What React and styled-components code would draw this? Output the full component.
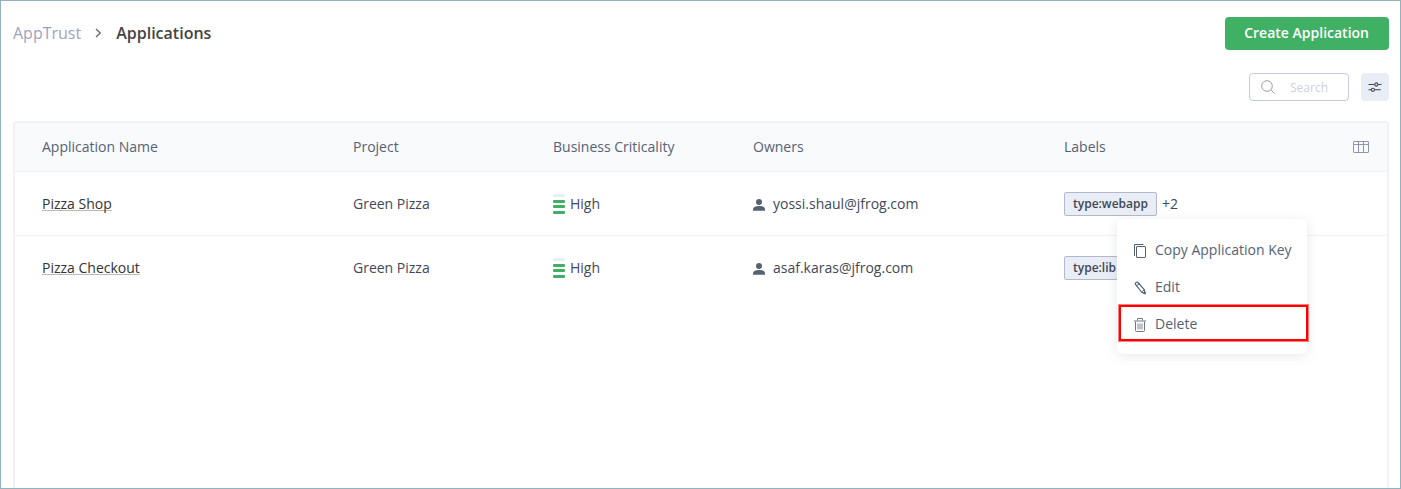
import styled, { createGlobalStyle } from 'styled-components';

const applications = [
    { name: "Pizza Shop", project: "Green Pizza", level: 3, criticality: "High", owner: "yossi.shaul@jfrog.com", label: "type:webapp", more: "+2" },
    { name: "Pizza Checkout", project: "Green Pizza", level: 3, criticality: "High", owner: "asaf.karas@jfrog.com", label: "type:lib", more: "" },
];

export default function App() {
    return (
        <>
            <GlobalStyle />
            <Page>
                <Header>
                    <Breadcrumb aria-label="Breadcrumb">
                        <a href="#apptrust">AppTrust</a>
                        <ChevronIcon />
                        <h1>Applications</h1>
                    </Breadcrumb>
                    <CreateButton type="button">Create Application</CreateButton>
                </Header>
                <Toolbar>
                    <SearchBox>
                        <SearchIcon />
                        <input type="text" placeholder="Search" aria-label="Search" />
                    </SearchBox>
                    <FilterButton type="button" aria-label="Filters">
                        <SlidersIcon />
                    </FilterButton>
                </Toolbar>
                <Panel>
                    <Table>
                        <colgroup>
                            <col />
                            <Col $width={200} />
                            <Col $width={200} />
                            <col />
                            <col />
                            <Col $width={39} />
                        </colgroup>
                        <thead>
                            <tr>
                                <th>Application Name</th>
                                <th>Project</th>
                                <th>Business Criticality</th>
                                <th>Owners</th>
                                <th>Labels</th>
                                <ActionCell as="th">
                                    <IconButton type="button" aria-label="Choose columns">
                                        <ColumnsIcon />
                                    </IconButton>
                                </ActionCell>
                            </tr>
                        </thead>
                        <tbody>
                            {applications.map((app) => <ApplicationRow key={app.name} app={app} />)}
                        </tbody>
                    </Table>
                    <ContextMenu />
                </Panel>
            </Page>
        </>
    )
}

function ApplicationRow({ app }) {
    return (
        <tr>
            <td><NameLink href="#application">{app.name}</NameLink></td>
            <td>{app.project}</td>
            <td>
                <Inline $gap={5}>
                    <Level>
                        {[4, 3, 2, 1].map((step) => <Bar key={step} $on={step <= app.level} />)}
                    </Level>
                    {app.criticality}
                </Inline>
            </td>
            <td>
                <Inline $gap={8}>
                    <UserIcon />
                    {app.owner}
                </Inline>
            </td>
            <td>
                <Inline $gap={5}>
                    <Tag>{app.label}</Tag>
                    {app.more}
                </Inline>
            </td>
            <ActionCell />
        </tr>
    )
}

function ContextMenu() {
    return (
        <Menu>
            <MenuItem type="button"><CopyIcon />Copy Application Key</MenuItem>
            <MenuItem type="button"><PencilIcon />Edit</MenuItem>
            <MenuItem type="button" $marked><TrashIcon />Delete</MenuItem>
        </Menu>
    )
}

/* icons */

const ChevronIcon = () => (
    <svg width="7" height="10" viewBox="0 0 7 10" fill="none" stroke="#556274" strokeWidth="1.2" aria-hidden="true">
        <path d="M1 1l4.300 4L1 9" />
    </svg>
)

const SearchIcon = () => (
    <svg width="14" height="14" viewBox="0 0 14 14" fill="none" stroke="#9a9fbd" strokeWidth="1" aria-hidden="true">
        <circle cx="6" cy="6" r="5.3" />
        <path d="M9.8 9.8l3.8 3.8" />
    </svg>
)

const SlidersIcon = () => (
    <svg width="14" height="10" viewBox="0 0 14 10" fill="none" stroke="#414857" strokeWidth="1.1" aria-hidden="true">
        <path d="M.5 2.5h6M10 2.5h3.5" />
        <circle cx="8.3" cy="2.5" r="1.6" />
        <path d="M.5 7.8h2.7M6.6 7.8h6.2" />
        <circle cx="4.9" cy="7.8" r="1.6" />
    </svg>
)

const ColumnsIcon = () => (
    <svg width="16" height="12" viewBox="0 0 16 12" fill="none" stroke="#8f94b5" aria-hidden="true">
        <rect x=".5" y=".5" width="15" height="11" rx=".5" />
        <path d="M.5 3.5h15M5.5 .5v11M10.5 .5v11" />
    </svg>
)

const UserIcon = () => (
    <svg width="12" height="14" viewBox="0 -2 12 14" fill="#556274" aria-hidden="true">
        <circle cx="6" cy="3" r="3" />
        <path d="M0 11.700v-1.200C0 8.200 2 7 6 7s6 1.200 6 3.500v1.200z" />
    </svg>
)

const CopyIcon = () => (
    <svg width="12" height="14" viewBox="0 0 12 14" fill="none" stroke="#556274" aria-hidden="true">
        <path d="M9.500 .5H.5V12" />
        <rect x="2.500" y="2.500" width="9" height="11" rx=".5" />
    </svg>
)

const PencilIcon = () => (
    <svg width="12" height="14" viewBox="0 0 12 14" fill="none" stroke="#556274" strokeWidth="1.2" strokeLinejoin="round" aria-hidden="true">
        <path d="M1.300 3.200C1 1.800 2.600 .7 4 1.500L10.300 8.700l.9 4-3.700-1.700z" />
        <path d="M2.600 4.700l2.900-2.100M7.500 11l2.800-2.300" strokeWidth="1" />
        <path d="M9.600 12l1-1 .6 1.700z" fill="#556274" />
    </svg>
)

const TrashIcon = () => (
    <svg width="12" height="14" viewBox="0 0 12 14" fill="none" stroke="#6f7a89" aria-hidden="true">
        <path d="M3.500 2.500V.5h5v2M0 3h12" />
        <path d="M1.500 3.500v9a1 1 0 0 0 1 1h7a1 1 0 0 0 1-1v-9" />
        <path d="M4 5.500v6M6 5.500v6M8 5.500v6" strokeWidth=".9" />
    </svg>
)

/* styles */

const GlobalStyle = createGlobalStyle`
    * {
        box-sizing: border-box;
    }

    body {
        margin: 0;
        background: #fff;
        color: #414857;
        font-family: "Open Sans", sans-serif;
        font-size: 14px;
        line-height: 20px;
    }

    button, input {
        font: inherit;
    }
`

const Page = styled.div`
    display: flex;
    flex-direction: column;
    min-height: 100vh;
    padding: 16px 11px 0 12px;
    border: 1px solid #93b2c0;
`

const Header = styled.header`
    display: flex;
    align-items: center;
    justify-content: space-between;
`

const Breadcrumb = styled.nav`
    display: flex;
    align-items: center;
    gap: 14px;
    padding-bottom: 2px;
    font-size: 16px;

    a {
        color: #9fa2bf;
        text-decoration: none;
    }

    h1 {
        margin: 0;
        color: #444;
        font-size: 16px;
        font-weight: 600;
    }
`

const CreateButton = styled.button`
    padding: 6px 20px 7px 19px;
    border: 0;
    border-radius: 4px;
    background: #40b065;
    color: #fff;
    font-weight: 600;
`

const Toolbar = styled.div`
    display: flex;
    justify-content: flex-end;
    gap: 12px;
    padding: 23px 0 20px;
`

const SearchBox = styled.label`
    display: flex;
    align-items: center;
    gap: 15px;
    width: 100px;
    height: 28px;
    padding: 0 11px;
    border: 1px solid #c5cbe3;
    border-radius: 4px;

    svg {
        flex: none;
    }

    input {
        width: 100%;
        min-width: 0;
        padding: 2px 0 0;
        border: 0;
        outline: 0;
        background: none;
        font-size: 12px;
    }

    input::placeholder {
        color: #ccd1e3;
    }
`

const FilterButton = styled.button`
    display: flex;
    align-items: center;
    justify-content: center;
    width: 28px;
    height: 28px;
    padding: 0;
    border: 0;
    border-radius: 4px;
    background: #e9edf5;
`

const Panel = styled.main`
    position: relative;
    flex: 1;
    border: 2px solid #f1f1f8;
    border-bottom: 0;
    border-radius: 4px 4px 0 0;
`

const Table = styled.table`
    width: 100%;
    table-layout: fixed;
    border-collapse: separate;
    border-spacing: 0;

    th, td {
        padding: 0 0 0 27px;
        text-align: left;
    }

    th {
        height: 49px;
        border-bottom: 1px solid #f0f1f6;
        background: #f9fafc;
        color: #556274;
        font-weight: 400;
    }

    td {
        height: 64px;
        border-bottom: 1px solid #f0f1f6;
    }

    tr:last-child td {
        border-bottom-color: transparent;
    }
`

const Col = styled.col`
    width: ${({ $width }) => $width}px;
`

const ActionCell = styled.td`
    && {
        padding: 0 0 0 5px;
    }
`

const IconButton = styled.button`
    display: flex;
    padding: 0;
    border: 0;
    background: none;
`

const NameLink = styled.a`
    color: #333;
    text-decoration: underline 1px #bbb;
    text-decoration-skip-ink: none;
    text-underline-offset: 1px;
`

const Inline = styled.div`
    display: flex;
    align-items: center;
    gap: ${({ $gap }) => $gap}px;
`

const Level = styled.span`
    display: flex;
    flex-direction: column;
    justify-content: space-between;
    width: 12px;
    height: 20px;
    margin-top: 1px;
`

const Bar = styled.span`
    height: 3px;
    border-radius: 1px;
    background: ${({ $on }) => $on ? "#40b065" : "#e9edf5"};
`

const Tag = styled.span`
    padding: 1px 8px;
    border: 1px solid #b3b8d0;
    border-radius: 2px;
    background: #e9edf5;
    font-size: 12px;
    font-weight: 600;
`

const Menu = styled.div`
    position: absolute;
    top: 96px;
    right: 80px;
    width: 190px;
    padding: 12px 0;
    border-radius: 6px;
    background: #fff;
    box-shadow: 0 2px 12px rgba(65, 72, 87, 0.12);
`

const MenuItem = styled.button`
    position: relative;
    display: flex;
    align-items: center;
    gap: 9px;
    width: 100%;
    height: 37px;
    padding: 0 0 0 17px;
    border: 0;
    background: none;
    color: #556274;
    white-space: nowrap;

    svg {
        flex: none;
        margin-top: 2px;
    }

    ${({ $marked }) => $marked && `
        &::after {
            content: "";
            position: absolute;
            inset: 0 -1px 1px 2px;
            border: 2px solid #f00;
            box-shadow: 0 0 0 1px rgba(255, 0, 0, 0.5);
        }
    `}
`
